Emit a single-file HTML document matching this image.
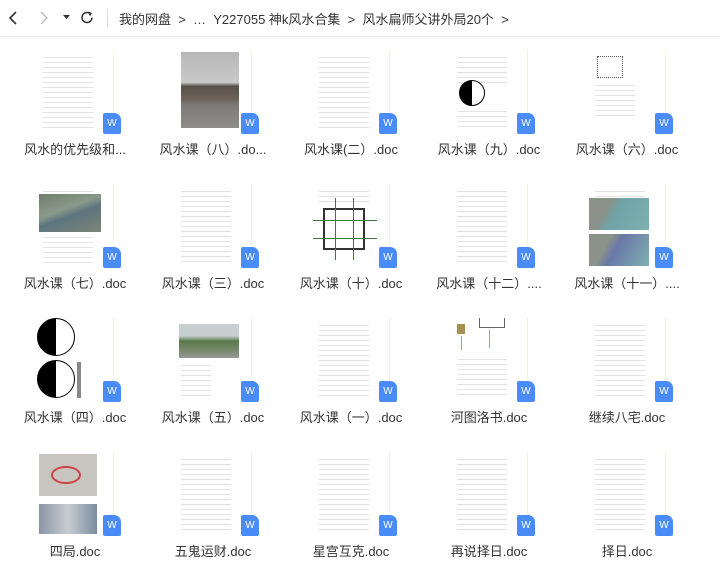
<!DOCTYPE html>
<html><head><meta charset="utf-8"><style>
*{margin:0;padding:0;box-sizing:border-box}
body{width:720px;height:582px;background:#fff;font-family:"Liberation Sans","Noto Sans CJK SC",sans-serif;position:relative;overflow:hidden;color:#333}
.hdr{position:absolute;left:0;top:0;width:720px;height:37px;border-bottom:1px solid #ececec}
.a{position:absolute;top:9px;font-size:13px;white-space:nowrap}
.t{position:absolute;width:84px;height:84px;background:#fff}
.ln{position:absolute;left:8px;top:4px;width:50px;height:76px;background:repeating-linear-gradient(#fff 0 3px,#e2e2e2 3px 4px,#fff 4px 5px);}
.ln2{position:absolute;left:8px;height:76px;background:repeating-linear-gradient(#fff 0 3px,#e4e4e4 3px 4px,#fff 4px 5px)}
.b{position:absolute;width:18px;height:21px;background:#4a8cf7;border-radius:2px 7px 2px 2px;color:#fff;font-size:10px;text-align:center;line-height:22px}
.l{position:absolute;width:130px;text-align:center;font-size:13px;color:#333;white-space:nowrap}
</style></head><body>
<div class="hdr">
<svg style="position:absolute;left:8px;top:11px" width="12" height="14"><path d="M8 1L2 7l6 6" stroke="#333" stroke-width="1.6" fill="none"/></svg>
<svg style="position:absolute;left:38px;top:11px" width="12" height="14"><path d="M3 1l6 6-6 6" stroke="#bbb" stroke-width="1.4" fill="none"/></svg>
<svg style="position:absolute;left:63px;top:15px" width="8" height="5"><path d="M0 0h7l-3.5 4z" fill="#333"/></svg>
<svg style="position:absolute;left:80px;top:10px" width="15" height="15"><path d="M12 7.5A5 5 0 1 1 10 3.5" stroke="#333" stroke-width="1.5" fill="none"/><path d="M8 1.5l4 1.5-2 3.5z" fill="#333"/></svg>
<div style="position:absolute;left:107px;top:9px;width:1px;height:18px;background:#ddd"></div>
<div class="a" style="left:119px">我的网盘 &nbsp;&gt; &nbsp;… &nbsp;Y227055 神k风水合集 &nbsp;&gt; &nbsp;风水扁师父讲外局20个 &nbsp;&gt;</div>
</div>
<div id="g"></div>
<script>
(function(){
var names=[["风水的优先级和...","风水课（八）.do...","风水课(二）.doc","风水课（九）.doc","风水课（六）.doc"],
["风水课（七）.doc","风水课（三）.doc","风水课（十）.doc","风水课（十二）....","风水课（十一）...."],
["风水课（四）.doc","风水课（五）.doc","风水课（一）.doc","河图洛书.doc","继续八宅.doc"],
["四局.doc","五鬼运财.doc","星宫互克.doc","再说择日.doc","择日.doc"]];
var special={
"0,1":'<div style="position:absolute;left:8px;top:2px;width:58px;height:76px;background:linear-gradient(#b7b7b7 0,#c9c9c9 40%,#5a5048 45%,#6b6258 62%,#7d7b78 70%,#8e8c8a 100%)"></div>',
"0,3":'<div class="ln" style="height:30px"></div><div style="position:absolute;left:10px;top:30px;width:26px;height:26px;border-radius:50%;background:linear-gradient(90deg,#000 50%,#fff 50%);border:1px solid #000"></div><div class="ln2" style="top:58px;width:50px;height:22px"></div>',
"0,4":'<div style="position:absolute;left:10px;top:6px;width:26px;height:22px;border:1px dotted #555"></div><div class="ln2" style="top:32px;width:40px;height:36px"></div>',
"1,0":'<div class="ln" style="height:8px"></div><div style="position:absolute;left:4px;top:10px;width:62px;height:38px;background:linear-gradient(160deg,#6f7d6a,#8a9a8a 40%,#5d7580 55%,#7c8577)"></div><div class="ln2" style="top:50px;width:50px;height:30px"></div>',
"1,2":'<div class="ln" style="height:16px"></div><div style="position:absolute;left:12px;top:24px;width:42px;height:42px;border:2px solid #333"></div><div style="position:absolute;left:2px;top:36px;width:64px;height:1px;background:#3a7a3a"></div><div style="position:absolute;left:2px;top:54px;width:64px;height:1px;background:#3a7a3a"></div><div style="position:absolute;left:24px;top:14px;width:1px;height:62px;background:#3a7a3a"></div><div style="position:absolute;left:42px;top:14px;width:1px;height:62px;background:#3a7a3a"></div>',
"1,4":'<div class="ln" style="height:12px"></div><div style="position:absolute;left:2px;top:14px;width:60px;height:32px;background:linear-gradient(120deg,#8a928a 30%,#6fa3a8 45%,#7fb0b0)"></div><div style="position:absolute;left:2px;top:50px;width:60px;height:32px;background:linear-gradient(120deg,#8a928a 30%,#6a78a8 45%,#7fb0b0)"></div>',
"2,0":'<div style="position:absolute;left:2px;top:0;width:38px;height:38px;border-radius:50%;background:linear-gradient(90deg,#000 50%,#fff 50%);border:1px solid #000"></div><div style="position:absolute;left:2px;top:42px;width:38px;height:38px;border-radius:50%;background:linear-gradient(90deg,#000 50%,#fff 50%);border:1px solid #000"></div><div style="position:absolute;left:42px;top:44px;width:4px;height:36px;background:#888"></div>',
"2,1":'<div class="ln" style="height:4px"></div><div style="position:absolute;left:6px;top:6px;width:60px;height:34px;background:linear-gradient(#c8cfcf 0,#c8cfcf 35%,#5a7a4a 50%,#7a8a70 80%,#999 100%)"></div><div class="ln2" style="top:44px;width:30px;height:36px"></div>',
"2,3":'<div style="position:absolute;left:8px;top:6px;width:8px;height:10px;background:#a89050"></div><div style="position:absolute;left:30px;top:0;width:26px;height:10px;border:1px solid #666;border-top:none"></div><div style="position:absolute;left:12px;top:18px;width:1px;height:14px;background:#d88"></div><div style="position:absolute;left:40px;top:12px;width:1px;height:18px;background:#d88"></div><div class="ln2" style="top:38px;width:50px;height:42px"></div>',
"3,0":'<div style="position:absolute;left:4px;top:2px;width:58px;height:42px;background:#c9c5c0"></div><div style="position:absolute;left:16px;top:14px;width:30px;height:18px;border:2px solid #c44;border-radius:50%"></div><div style="position:absolute;left:4px;top:52px;width:58px;height:30px;background:linear-gradient(90deg,#8a96a6,#c7ccd2 50%,#7c8c9c)"></div>'
};
var h='';
for(var r=0;r<4;r++)for(var c=0;c<5;c++){
 var cx=75+138*c,ty=50+134*r;
 var inner=special[r+','+c]||'<div class="ln"></div>';
 h+='<div class="t" style="left:'+(cx-40)+'px;top:'+ty+'px">'+inner+'<div style="position:absolute;left:78px;top:0;width:1px;height:84px;background:#f3f3d8"></div></div>';
 h+='<div class="b" style="left:'+(cx+28)+'px;top:'+(ty+63)+'px">W</div>';
 h+='<div class="l" style="left:'+(cx-65)+'px;top:'+(139+134*r)+'px">'+names[r][c]+'</div>';
}
document.getElementById('g').innerHTML=h;
})();
</script>
</body></html>
